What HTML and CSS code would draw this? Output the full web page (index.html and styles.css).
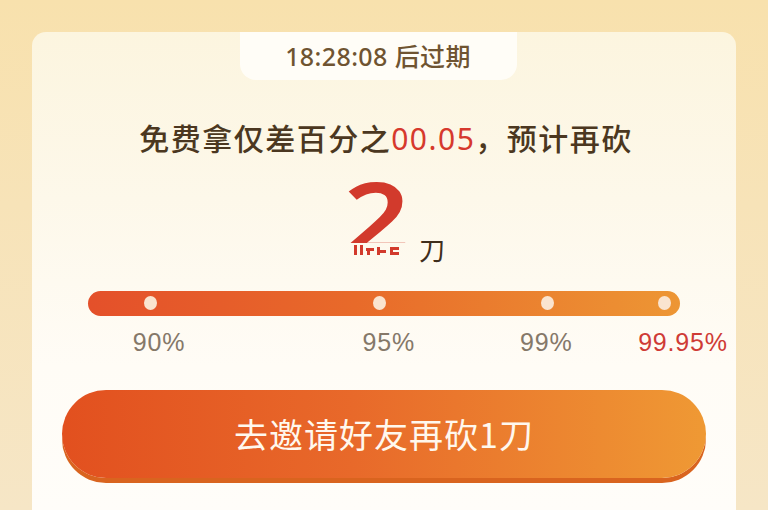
FILE: index.html
```html
<!DOCTYPE html>
<html lang="zh">
<head>
<meta charset="utf-8">
<link rel="stylesheet" href="styles.css">
</head>
<body>
<div class="page">
  <div class="card">
    <div class="timer">18:28:08 后过期</div>
    <div class="title">免费拿仅差百分之<span class="red">00.05</span>，预计再砍</div>
    <div class="count">
      <div class="digit-box">
        <div class="digit-clip"><span class="digit">2</span></div>
        <svg class="frag" width="52" height="14" viewBox="0 0 52 14">
          <rect x="2" y="3" width="3" height="10" fill="#d23a2c"/>
          <rect x="8" y="3" width="3" height="10" fill="#d23a2c"/>
          <rect x="14" y="6" width="8" height="3" fill="#d23a2c"/>
          <rect x="15" y="9" width="3" height="4" fill="#d23a2c"/>
          <rect x="25" y="5" width="3" height="8" fill="#d23a2c"/>
          <rect x="28" y="8" width="6" height="3" fill="#d23a2c"/>
          <rect x="38" y="5" width="9" height="3" fill="#d23a2c"/>
          <rect x="38" y="8" width="3" height="5" fill="#d23a2c"/>
          <rect x="41" y="10" width="6" height="3" fill="#d23a2c"/>
        </svg>
      </div>
      <span class="unit">刀</span>
    </div>
    <div class="progress">
      <div class="bar">
        <span class="dot" style="left:10.6%"></span>
        <span class="dot" style="left:49.3%"></span>
        <span class="dot" style="left:77.7%"></span>
        <span class="dot" style="left:97.3%"></span>
      </div>
      <div class="labels">
        <span class="label" style="left:12%">90%</span>
        <span class="label" style="left:50.8%">95%</span>
        <span class="label" style="left:77.4%">99%</span>
        <span class="label label-red" style="left:100.5%">99.95%</span>
      </div>
    </div>
    <div class="btn">去邀请好友再砍1刀</div>
  </div>
</div>
</body>
</html>
```
FILE: styles.css
```css
html, body {
  margin: 0;
  padding: 0;
}
body {
  width: 768px;
  height: 510px;
  overflow: hidden;
  background: linear-gradient(180deg, #f8e1ad 0%, #f7e3b8 40%, #f6e6c6 100%);
  font-family: "Noto Sans", "Noto Sans CJK SC", sans-serif;
}
.page {
  padding: 32px 32px 0;
}
.card {
  height: 478px;
  overflow: hidden;
  border-radius: 14px 14px 0 0;
  background: linear-gradient(180deg, #fcf5df 0%, #fdf8ea 35%, #fffcf6 70%, #fffdf9 100%);
  display: flex;
  flex-direction: column;
  align-items: center;
}
.timer {
  width: 277px;
  height: 48px;
  margin-right: 12px;
  border-radius: 0 0 16px 16px;
  background: #fffdf7;
  color: #6f5431;
  font-size: 25px;
  letter-spacing: 0.4px;
  font-weight: 500;
  line-height: 48px;
  text-align: center;
  font-family: "Noto Sans", "Noto Sans CJK SC", sans-serif;
}
.title {
  margin-top: 36px;
  height: 42px;
  line-height: 42px;
  font-size: 30px;
  letter-spacing: 1.5px;
  font-weight: 500;
  color: #4b3720;
  font-family: "Noto Sans CJK SC", sans-serif;
  padding-left: 4px;
}
.red {
  color: #d6392d;
  font-family: "Noto Sans", sans-serif;
  font-weight: 400;
  letter-spacing: 1.5px;
}
.count {
  margin-top: 10px;
  height: 123px;
  display: flex;
  align-items: flex-end;
  padding-left: 22px;
}
.digit-box {
  width: 64px;
  display: flex;
  flex-direction: column;
  align-items: center;
  margin-bottom: 35px;
}
.digit-clip {
  height: 76px;
  overflow: hidden;
  width: 64px;
  display: flex;
  justify-content: center;
}
.digit {
  font-family: "Noto Sans", sans-serif;
  font-weight: 600;
  font-size: 100px;
  line-height: 100px;
  color: #d23a2c;
  margin-top: -2px;
  display: block;
  transform: scaleX(1.16);
}
.frag {
  display: block;
  margin-top: -1px;
  margin-left: 2px;
}
.unit {
  font-size: 26px;
  color: #3f2e1c;
  line-height: 30px;
  margin-bottom: 27px;
  margin-left: 10px;
  font-family: "Noto Sans CJK SC", sans-serif;
}
.progress {
  align-self: stretch;
  margin: 0 56px;
}
.bar {
  position: relative;
  height: 25px;
  border-radius: 12.5px;
  background: linear-gradient(90deg, #e4502a 0%, #e86a2a 45%, #ed9634 100%);
}
.dot {
  position: absolute;
  top: 5px;
  width: 13px;
  height: 14px;
  margin-left: -6.5px;
  border-radius: 50%;
  background: #fae4cf;
}
.labels {
  position: relative;
  height: 48px;
}
.label {
  position: absolute;
  top: 12px;
  transform: translateX(-50%);
  font-family: "Liberation Sans", "Noto Sans", sans-serif;
  font-size: 25px;
  letter-spacing: 0.8px;
  line-height: 28px;
  color: #857869;
  white-space: nowrap;
}
.label-red {
  color: #cf3b36;
}
.btn {
  flex-shrink: 0;
  align-self: stretch;
  margin: 26px 30px 0;
  height: 88px;
  border-radius: 44px;
  background: linear-gradient(90deg, #e2501f 0%, #e8692a 45%, #ef9934 100%);
  box-shadow: 0 5px 0 #d9641f;
  color: #fff8ee;
  font-family: "Noto Sans CJK SC", sans-serif;
  font-size: 34px;
  line-height: 88px;
  text-align: center;
  letter-spacing: 1px;
}
```
